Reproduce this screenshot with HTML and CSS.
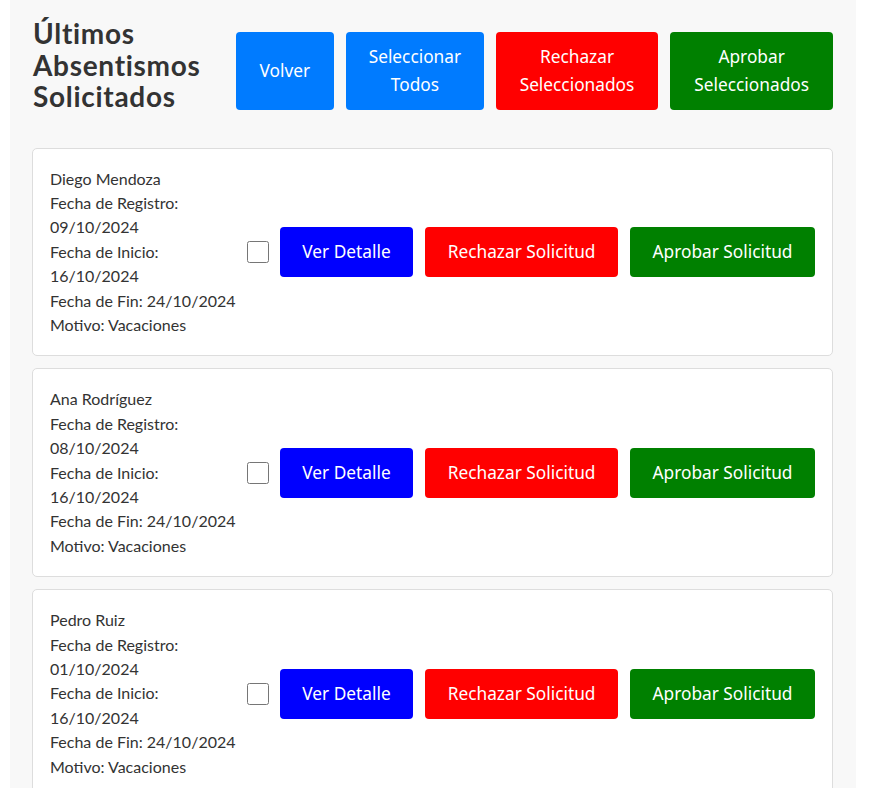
FILE: index.html
```html
<!DOCTYPE html>
<html lang="es">
<head>
<meta charset="utf-8">
<title>Últimos Absentismos Solicitados</title>
<link rel="stylesheet" href="styles.css">
</head>
<body>
<div class="container">
  <div class="header">
    <h2 class="title">Últimos Absentismos Solicitados</h2>
    <div class="header-actions">
      <button class="btn btn-primary btn-back">Volver</button>
      <button class="btn btn-primary">Seleccionar Todos</button>
      <button class="btn btn-red btn-wide">Rechazar Seleccionados</button>
      <button class="btn btn-green btn-wide">Aprobar Seleccionados</button>
    </div>
  </div>
  <div class="list">
    <div class="card">
      <div class="info">
        <div>Diego Mendoza</div>
        <div>Fecha de Registro: 09/10/2024</div>
        <div>Fecha de Inicio: 16/10/2024</div>
        <div>Fecha de Fin: 24/10/2024</div>
        <div>Motivo: Vacaciones</div>
      </div>
      <div class="actions">
        <input type="checkbox" class="check">
        <button class="btn btn-blue">Ver Detalle</button>
        <button class="btn btn-red">Rechazar Solicitud</button>
        <button class="btn btn-green">Aprobar Solicitud</button>
      </div>
    </div>
    <div class="card">
      <div class="info">
        <div>Ana Rodríguez</div>
        <div>Fecha de Registro: 08/10/2024</div>
        <div>Fecha de Inicio: 16/10/2024</div>
        <div>Fecha de Fin: 24/10/2024</div>
        <div>Motivo: Vacaciones</div>
      </div>
      <div class="actions">
        <input type="checkbox" class="check">
        <button class="btn btn-blue">Ver Detalle</button>
        <button class="btn btn-red">Rechazar Solicitud</button>
        <button class="btn btn-green">Aprobar Solicitud</button>
      </div>
    </div>
    <div class="card">
      <div class="info">
        <div>Pedro Ruiz</div>
        <div>Fecha de Registro: 01/10/2024</div>
        <div>Fecha de Inicio: 16/10/2024</div>
        <div>Fecha de Fin: 24/10/2024</div>
        <div>Motivo: Vacaciones</div>
      </div>
      <div class="actions">
        <input type="checkbox" class="check">
        <button class="btn btn-blue">Ver Detalle</button>
        <button class="btn btn-red">Rechazar Solicitud</button>
        <button class="btn btn-green">Aprobar Solicitud</button>
      </div>
    </div>
  </div>
</div>
</body>
</html>
```
FILE: styles.css
```css
html, body {
  margin: 0;
  padding: 0;
  background: #ffffff;
}
body {
  font-family: Lato, "Noto Sans", sans-serif;
  color: #333333;
}
.container {
  margin-left: 10px;
  width: 846px;
  min-height: 788px;
  box-sizing: border-box;
  background: #f8f8f8;
  padding: 18px 23px 0 22px;
}
.header {
  display: flex;
  align-items: flex-start;
  justify-content: space-between;
  gap: 12px;
}
.title {
  margin: 0;
  font-family: Lato, sans-serif;
  font-weight: 700;
  font-size: 28px;
  line-height: 31.5px;
  color: #333333;
  letter-spacing: 0.7px;
  flex: 1;
  padding-left: 1px;
}
.header-actions {
  display: flex;
  gap: 12px;
  margin-top: 14px;
}
.btn {
  font-family: "Noto Sans", "Open Sans", sans-serif;
  font-size: 17.3px;
  line-height: 28px;
  color: #ffffff;
  border: none;
  border-radius: 4px;
  padding: 11px 22.5px;
  cursor: pointer;
}
.header-actions .btn {
  width: min-content;
  height: 78px;
  padding: 0 22.5px;
}
.header-actions .btn-back {
  padding: 0 24px;
}
.header-actions .btn-wide {
  padding: 0 24px;
}
.btn-primary { background: #007bff; }
.btn-blue { background: #0000ff; }
.btn-red { background: #ff0000; }
.btn-green { background: #008000; }
.list {
  margin-top: 35px;
  display: flex;
  flex-direction: column;
  gap: 12px;
}
.card {
  background: #ffffff;
  border: 1px solid #dddddd;
  border-radius: 5px;
  padding: 18px 17px;
  display: flex;
  align-items: center;
  gap: 8px;
}
.info {
  flex: 1;
  min-width: 0;
  font-size: 16px;
  line-height: 24.4px;
  color: #333333;
}
.actions {
  display: flex;
  align-items: center;
  gap: 12px;
  flex: none;
}
.check {
  width: 22px;
  height: 22px;
  margin: 0 -1px 0 0;
}
.actions .btn {
  height: 50px;
}
```
